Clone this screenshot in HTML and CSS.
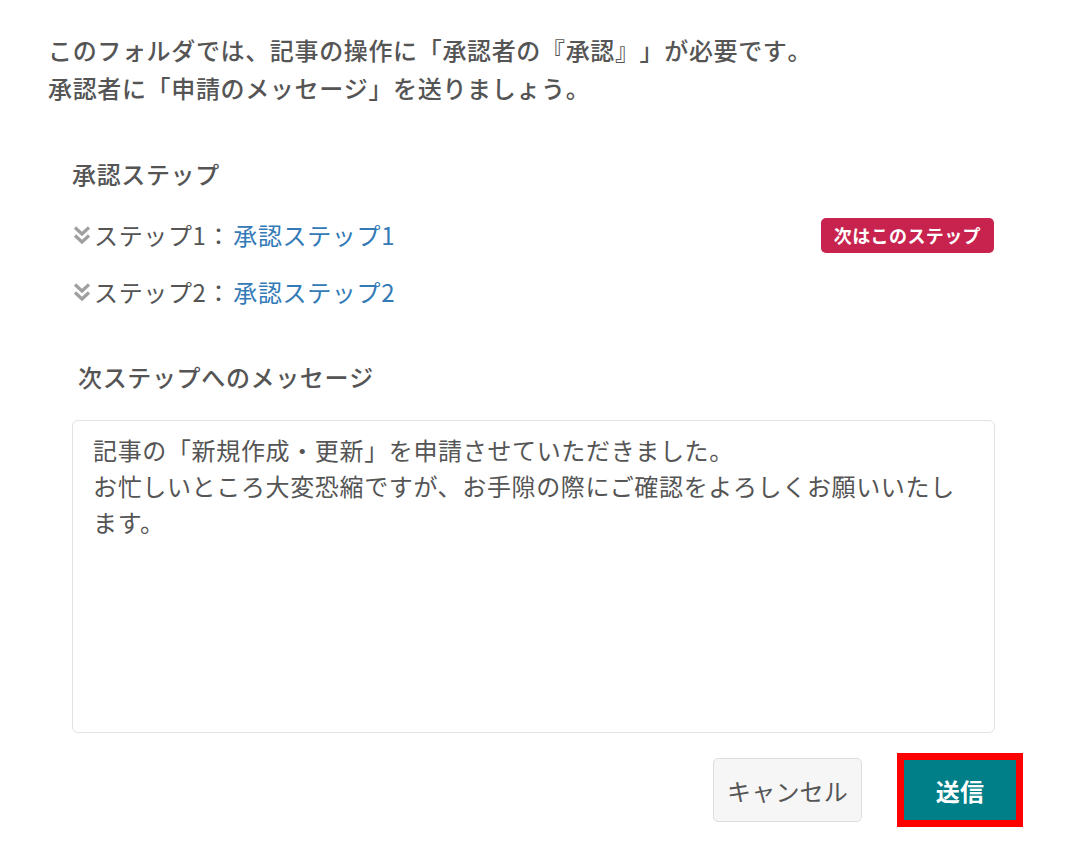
FILE: index.html
```html
<!DOCTYPE html>
<html lang="ja">
<head>
<meta charset="utf-8">
<title>承認申請</title>
<link rel="stylesheet" href="styles.css">
</head>
<body>
<div class="page">
  <div class="intro">
    <p>このフォルダでは、記事の操作に「承認者の『承認』」が必要です。</p>
    <p>承認者に「申請のメッセージ」を送りましょう。</p>
  </div>

  <div class="section">
    <h2 class="section-title">承認ステップ</h2>
    <ul class="steps">
      <li class="step">
        <span class="step-label">
          <svg class="chev" viewBox="0 0 18 20" aria-hidden="true"><polyline points="2,2.5 9,9 16,2.5"/><polyline points="2,10.5 9,17 16,10.5"/></svg>ステップ1：<a class="step-link" href="#">承認ステップ1</a>
        </span>
        <span class="badge">次はこのステップ</span>
      </li>
      <li class="step">
        <span class="step-label">
          <svg class="chev" viewBox="0 0 18 20" aria-hidden="true"><polyline points="2,2.5 9,9 16,2.5"/><polyline points="2,10.5 9,17 16,10.5"/></svg>ステップ2：<a class="step-link" href="#">承認ステップ2</a>
        </span>
      </li>
    </ul>

    <h2 class="message-title">次ステップへのメッセージ</h2>
    <textarea class="message">記事の「新規作成・更新」を申請させていただきました。
お忙しいところ大変恐縮ですが、お手隙の際にご確認をよろしくお願いいたします。</textarea>
  </div>

  <div class="actions">
    <button class="btn btn-cancel" type="button">キャンセル</button>
    <div class="highlight">
      <button class="btn btn-send" type="button">送信</button>
    </div>
  </div>
</div>
</body>
</html>
```
FILE: styles.css
```css
html, body {
  margin: 0;
  padding: 0;
  background: #ffffff;
}

body {
  font-family: "Noto Sans CJK JP", "Noto Sans", sans-serif;
  color: #555555;
  text-spacing-trim: space-all;
  font-kerning: none;
  letter-spacing: 0.65px;
}

.page {
  padding: 31px 56px 0 48px;
}

.intro p {
  margin: 0;
  font-size: 24px;
  line-height: 38px;
  font-weight: 500;
  color: #555555;
}

.section {
  width: 923px;
  margin: 48px 0 0 24px;
}

.section-title {
  margin: 0;
  font-size: 24px;
  line-height: 38px;
  font-weight: 500;
  color: #555555;
}

.steps {
  list-style: none;
  margin: 23px 0 0 0;
  padding: 0;
  display: flex;
  flex-direction: column;
  gap: 19px;
}

.step {
  display: flex;
  align-items: center;
  justify-content: space-between;
  height: 38px;
}

.step-label {
  display: flex;
  align-items: center;
  font-size: 24px;
  line-height: 38px;
  color: #555555;
  white-space: pre;
}

.chev {
  width: 18px;
  height: 20px;
  margin: 0 3px 1px 1px;
  fill: none;
  stroke: #a0a0a0;
  stroke-width: 3.2;
}

.step-link {
  color: #337ab7;
  text-decoration: none;
  margin-left: 2px;
}

.badge {
  display: inline-flex;
  align-items: center;
  height: 35px;
  padding: 0 13px;
  margin-right: 1px;
  border-radius: 5px;
  background: #c8234e;
  color: #ffffff;
  font-size: 18px;
  font-weight: 700;
  letter-spacing: 0.4px;
}

.message-title {
  margin: 47px 0 0 6px;
  font-size: 24px;
  line-height: 38px;
  font-weight: 500;
  color: #555555;
}

.message {
  display: block;
  box-sizing: border-box;
  width: 923px;
  height: 313px;
  margin-top: 24px;
  padding: 11px 28px 11px 20px;
  border: 1px solid #e2e2e2;
  border-radius: 6px;
  font-family: "Noto Sans CJK JP", "Noto Sans", sans-serif;
  font-size: 24px;
  line-height: 36px;
  letter-spacing: 0.65px;
  color: #555555;
  resize: none;
  outline: none;
  overflow: hidden;
  text-spacing-trim: space-all;
}

.actions {
  display: flex;
  justify-content: flex-end;
  align-items: center;
  gap: 35px;
  margin-top: 20px;
}

.btn {
  font-family: "Noto Sans CJK JP", "Noto Sans", sans-serif;
  font-size: 24px;
  cursor: pointer;
  text-spacing-trim: space-all;
  letter-spacing: 0.2px;
}

.btn-cancel {
  box-sizing: border-box;
  width: 149px;
  height: 64px;
  border: 1px solid #dedede;
  border-radius: 5px;
  background: #f6f6f6;
  color: #555555;
  padding: 0;
}

.highlight {
  border: 7px solid #ff0000;
  display: flex;
}

.btn-send {
  width: 112px;
  height: 60px;
  border: none;
  background: #007f88;
  color: #ffffff;
  font-weight: 700;
  padding: 0;
}
```
